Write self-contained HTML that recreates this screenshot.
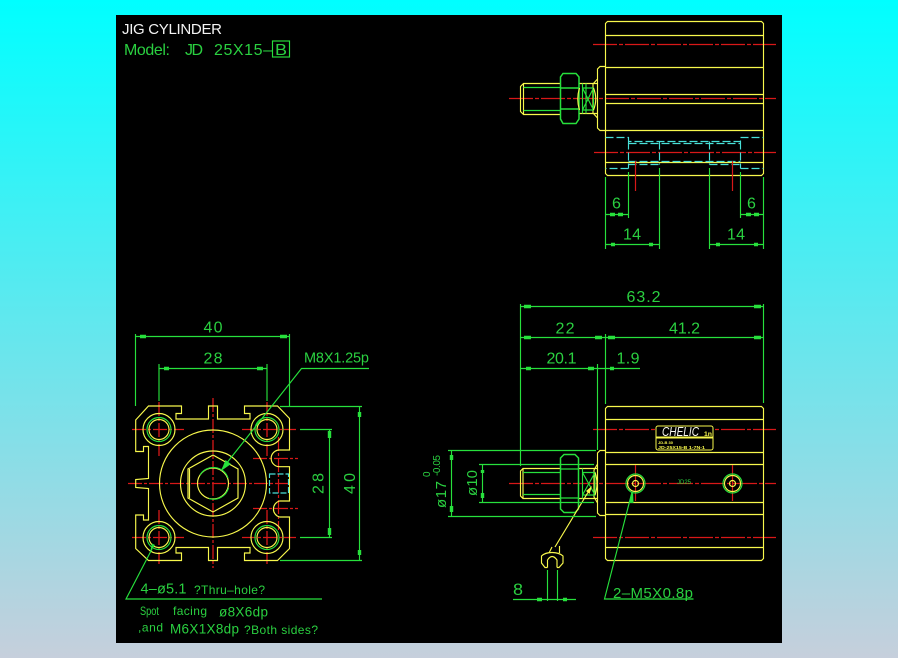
<!DOCTYPE html>
<html>
<head>
<meta charset="utf-8">
<style>
html,body{margin:0;padding:0;width:898px;height:658px;overflow:hidden;background:linear-gradient(to bottom,#00ffff 0%,#c6cfdc 100%);}
svg{position:absolute;left:0;top:0;display:block;}
text{font-family:"Liberation Sans",sans-serif;fill:#2ad040;stroke:none;}
.y{fill:none;stroke:#f8f84c;stroke-width:1.15;}
.g{fill:none;stroke:#27e03c;stroke-width:1.15;}
.a{fill:none;stroke:#27e03c;stroke-width:3.4;}
.r{fill:none;stroke:#d81818;stroke-width:1.3;stroke-dasharray:24 2 4 2;}
.rs{fill:none;stroke:#d81818;stroke-width:1.3;stroke-dasharray:14 2 3 2;}
.c{fill:none;stroke:#48e0d8;stroke-width:1.15;stroke-dasharray:8 3;}
</style>
</head>
<body>
<svg width="898" height="658" viewBox="0 0 898 658" xmlns="http://www.w3.org/2000/svg">
<rect x="116" y="15" width="666" height="628" fill="#000"/>

<!-- Title -->
<text x="122" y="34" font-size="15" textLength="100" style="fill:#f4f4f4">JIG CYLINDER</text>
<text x="124" y="55" font-size="16" textLength="46">Model:</text>
<text x="185" y="55" font-size="16" textLength="18">JD</text>
<text x="214" y="55" font-size="16" textLength="58">25X15–</text>
<text x="275" y="55" font-size="16" textLength="12" lengthAdjust="spacingAndGlyphs">B</text>
<rect class="g" x="272.5" y="41" width="17" height="16"/>

<!-- TOP RIGHT VIEW -->
<path class="r" d="M593 44.5H776M509 98.5H776M594 152.5H776"/>
<path class="y" d="M607.5 21.5H761.5L763.5 23.5V173.5L761.5 175.5H607.5L605.5 173.5V23.5ZM605.5 35.5H763.5M605.5 67.5H763.5M605.5 94.5H763.5M605.5 103.5H763.5M605.5 130.5H763.5M605.5 162.5H763.5"/>
<path class="c" d="M605.5 137.5H628.5V141.5H740.5V137.5H763.5M628.5 143.5H740.5M628.5 161.5H740.5M628.5 164.5H659.5M709.5 164.5H740.5M628.5 168.5H605.5M740.5 168.5H763.5M628.5 141.5V168.5M659.5 141.5V164.5M709.5 141.5V164.5M740.5 141.5V168.5"/>
<path d="M635.5 161V191M732.5 161V191" fill="none" stroke="#d81818" stroke-width="1.2"/>
<!-- rod top -->
<path class="y" d="M560 83.5H523.5L520.5 86.5V111.5L523.5 114.5H560M523.5 83.5V114.5M579 83.5H597M579 113.5H597"/>
<path class="g" d="M560 87.5H523.5M560 110.5H523.5"/>
<path class="y" d="M605.5 66.5H600L597.5 69V128L600 130.5H605.5M597.5 79L593 84V113L597.5 118"/>
<path d="M563 73.5H576L579 77V119L576 123.5H563L560.5 119V77Z M560.5 88H579M560.5 109H579" fill="none" stroke="#27e03c" stroke-width="1.5"/>
<path class="g" d="M582.5 83.5V113.5M586 83.5V113.5M582.5 88H593.5V110H582.5M582.5 88L593.5 110M593.5 88L582.5 110"/>
<path class="y" d="M593.5 88Q598 99 593.5 110M579.5 88Q576 99 579.5 110"/>
<!-- top dims -->
<path class="g" d="M605.5 177V249M628.5 172V218M659.5 168V249M709.5 168V249M740.5 172V218M763.5 177V249M605.5 214.5H628.5M740.5 214.5H763.5M605.5 244.5H659.5M709.5 244.5H763.5"/>
<path class="a" d="M610 214.5h5M618 214.5h5M746 214.5h5M754 214.5h5M611 244.5h4M649 244.5h4M716 244.5h4M754 244.5h4"/>
<text x="612" y="208.5" font-size="16">6</text>
<text x="747" y="208.5" font-size="16">6</text>
<text x="623" y="239.5" font-size="16" textLength="18">14</text>
<text x="727" y="239.5" font-size="16" textLength="18">14</text>

<!-- BOTTOM RIGHT VIEW -->
<path class="r" d="M593 429.5H776M509 483.5H776M593 537.5H776"/>
<path class="y" d="M607.5 406.5H761.5L763.5 408.5V558.5L761.5 560.5H607.5L605.5 558.5V408.5ZM605.5 419.5H763.5M605.5 452.5H763.5M605.5 464.5H763.5M605.5 502.5H763.5M605.5 514.5H763.5M605.5 547.5H763.5"/>
<!-- label -->
<rect x="656" y="426" width="57" height="24" rx="2" fill="#000" stroke="#f8f84c"/>
<path d="M656 437.5H713" stroke="#f8f84c" stroke-width="2" fill="none"/>
<text x="662" y="436" font-size="13" font-style="italic" textLength="37" lengthAdjust="spacingAndGlyphs" style="fill:#f8f8f0">CHELIC</text>
<text x="704" y="436" font-size="6" textLength="8" lengthAdjust="spacingAndGlyphs" style="fill:#f8f84c;font-weight:bold">1n</text>
<text x="658" y="444" font-size="4" textLength="15" lengthAdjust="spacingAndGlyphs" style="fill:#f8f84c;font-weight:bold">JD-B 30</text>
<text x="658" y="449" font-size="4.5" textLength="47" lengthAdjust="spacingAndGlyphs" style="fill:#f8f84c;font-weight:bold">JD-25X15-B 1-7N-1</text>
<text x="677" y="484" font-size="6.5" textLength="14" lengthAdjust="spacingAndGlyphs">JD25</text>
<!-- ports -->
<path d="M635.5 465V501M732.5 465V501" fill="none" stroke="#d81818" stroke-width="1.2"/>
<circle class="g" cx="635.5" cy="483.5" r="9.5"/><circle class="y" cx="635.5" cy="483.5" r="8"/><circle class="y" cx="635.5" cy="483.5" r="3"/>
<circle class="g" cx="732.5" cy="483.5" r="9.5"/><circle class="y" cx="732.5" cy="483.5" r="8"/><circle class="y" cx="732.5" cy="483.5" r="3"/>
<path class="g" d="M632 492L604.5 599H693.5"/>
<path d="M633 491L629 503L633.5 503Z" fill="#27e03c"/>
<text x="613" y="598" font-size="15" textLength="80">2–M5X0.8p</text>
<!-- rod bottom -->
<path class="y" d="M560 468.5H523L520.5 471V496L523 498.5H560M523 468.5V498.5M579 468.5H597M579 498.5H597"/>
<path class="g" d="M560 472.5H523M560 494.5H523"/>
<path class="y" d="M605.5 450.5H600L597.5 453V513L600 515.5H605.5M597.5 464L594 470V497L597.5 503"/>
<path d="M564 454.5H575L578.5 458V509L575 512.5H564L560.5 509V458Z" fill="none" stroke="#27e03c" stroke-width="1.5"/>
<path class="g" d="M560.5 469H578.5M560.5 498H578.5M582.5 472.5H595V495H582.5ZM582.5 472.5L595 495M595 472.5L582.5 495M582.5 468.5V498.5"/>
<path class="y" d="M595 472.5Q599 483.5 595 495"/>
<!-- wrench -->
<path class="y" d="M590 489L555 547M552 547L549 553M559.5 546V553M547.5 567.5H545L541.5 563V556Q545 552.5 552 552.5T563 556V563L559 567.5H557M547.5 567.5V560Q552 553 557 560V567.5"/>
<path d="M592 486L586 491L589.5 494Z" fill="#f8f84c"/>
<!-- bottom-right dims -->
<path class="g" d="M520.5 304V466M763.5 304V403M605.5 334V404M597.5 364V450M520.5 306.5H763.5M520.5 337.5H763.5M520.5 368.5H640M448 450.5H596M448 516.5H596M479 464.5H594M479 502.5H594M451.5 451V516M482.5 465V502M547.5 570V601M557.5 570V601M513 599.5H576"/>
<path class="a" d="M524 306.5h7M754 306.5h7M524 337.5h7M595 337.5h7M608 337.5h7M754 337.5h7M526 368.5h5M588 368.5h6M610 368.5h4M451.5 455v5M451.5 506v6M482.5 470v3M482.5 493v5M537 599.5h5M563 599.5h4"/>
<text x="626.5" y="302" font-size="16" textLength="34">63.2</text>
<text x="555.5" y="333.5" font-size="16" textLength="19">22</text>
<text x="669" y="333.5" font-size="16" textLength="31">41.2</text>
<text x="546.5" y="363.5" font-size="16" textLength="30">20.1</text>
<text x="616.5" y="363.5" font-size="16" textLength="23">1.9</text>
<text x="513" y="595" font-size="17" textLength="10" lengthAdjust="spacingAndGlyphs">8</text>
<text transform="translate(477 496) rotate(-90)" font-size="15" textLength="26">ø10</text>
<text transform="translate(446 508) rotate(-90)" font-size="15" textLength="27">ø17</text>
<text transform="translate(440 476) rotate(-90)" font-size="10" textLength="21">-0.05</text>
<text transform="translate(430 477) rotate(-90)" font-size="10">0</text>

<!-- FRONT VIEW centre lines -->
<path class="rs" d="M213 398V568M128 483.5H288"/>
<path class="rs" d="M159 402V456M132 429.5H184M267 402V456M242 429.5H296M159 510V564M132 537.5H184M267 510V564M242 537.5H296"/>
<path d="M278.5 437V530M253 458.5H298M253 508.5H298" fill="none" stroke="#d81818" stroke-width="1.2" stroke-dasharray="14 2 3 2"/>
<!-- Profile -->
<path class="y" d="M135.7 420L148.5 406H181.5V413.5H176V419H208.5V406H217.5V419H250V413.5H244.5V406H277.5L289.5 418.5V450H279.5A8.3 8.3 0 0 0 279.5 466.7H289.5V501H279.5A8.3 8.3 0 0 0 279.5 517H289.5V548.5L277.5 560.5H244.5V553H250V547.5H217.5V560.5H208.5V547.5H176V553H181.5V560.5H148.5L135.7 548.5V515H143.5V520H148.5V488.5L135.7 487.5V479.5L148.5 478.5V446.5H143.5V451.5H135.7Z"/>
<path class="c" style="stroke-dasharray:6 2" d="M269.5 474H288.5V493H269.5Z"/>
<!-- holes -->
<circle class="y" cx="159" cy="429.5" r="16"/><circle class="g" cx="159" cy="429.5" r="12"/><circle class="y" cx="159" cy="429.5" r="10"/>
<circle class="y" cx="267" cy="429.5" r="16"/><circle class="g" cx="267" cy="429.5" r="12"/><circle class="y" cx="267" cy="429.5" r="10"/>
<circle class="y" cx="159" cy="537.5" r="16"/><circle class="g" cx="159" cy="537.5" r="12"/><circle class="y" cx="159" cy="537.5" r="10"/>
<circle class="y" cx="267" cy="537.5" r="16"/><circle class="g" cx="267" cy="537.5" r="12"/><circle class="y" cx="267" cy="537.5" r="10"/>
<!-- centre -->
<circle class="y" cx="213" cy="483.5" r="53.5"/>
<circle class="y" cx="213" cy="483.5" r="32.5"/>
<path class="y" d="M213 455L238 469V498L213 512L188 498V469Z"/>
<path class="y" d="M189.5 469V498"/>
<circle class="y" cx="213" cy="483.5" r="15.5"/>
<path class="g" d="M200 475A15.5 15.5 0 0 1 228 478M228.5 488A15.5 15.5 0 0 1 209 498.5"/>
<!-- front dims -->
<path class="g" d="M135.5 334V406M289.5 334V406M159 364V401M267 364V401M135.5 336.5H289.5M159 368.5H267M280 406.5H362M280 560.5H362M300 429.5H332M300 537.5H332M359.5 406.5V560.5M329.5 429.5V537.5M222 469L301.5 368.5H369M152 549L126 599H322"/>
<path d="M221 471L231 464L225.5 460Z" fill="#27e03c"/>
<path d="M150 552L155 545L152 543.5Z" fill="#27e03c"/>
<path class="a" d="M140 336.5h6M280 336.5h7M164 368.5h5M257 368.5h6M359.5 412v5M359.5 550v5M329.5 431v7M329.5 528v7"/>
<text x="203.5" y="332.5" font-size="16" textLength="19">40</text>
<text x="203.5" y="363.5" font-size="16" textLength="19">28</text>
<text x="304" y="362.5" font-size="14.5" textLength="65">M8X1.25p</text>
<text transform="translate(323.5 494) rotate(-90)" font-size="16" textLength="21">28</text>
<text transform="translate(355 494) rotate(-90)" font-size="16" textLength="21">40</text>
<!-- notes -->
<text x="140.5" y="593.5" font-size="14.5" textLength="46">4–ø5.1</text>
<text x="194" y="594" font-size="12" textLength="71">?Thru–hole?</text>
<text x="140" y="615" font-size="12" textLength="19" lengthAdjust="spacingAndGlyphs">Spot</text>
<text x="173" y="615" font-size="12" textLength="34">facing</text>
<text x="219" y="616.5" font-size="13.5" textLength="49">ø8X6dp</text>
<text x="138" y="631.5" font-size="12" textLength="25">,and</text>
<text x="170" y="633.5" font-size="13.5" textLength="69">M6X1X8dp</text>
<text x="244" y="634" font-size="12" textLength="74">?Both sides?</text>
</svg>
</body>
</html>
